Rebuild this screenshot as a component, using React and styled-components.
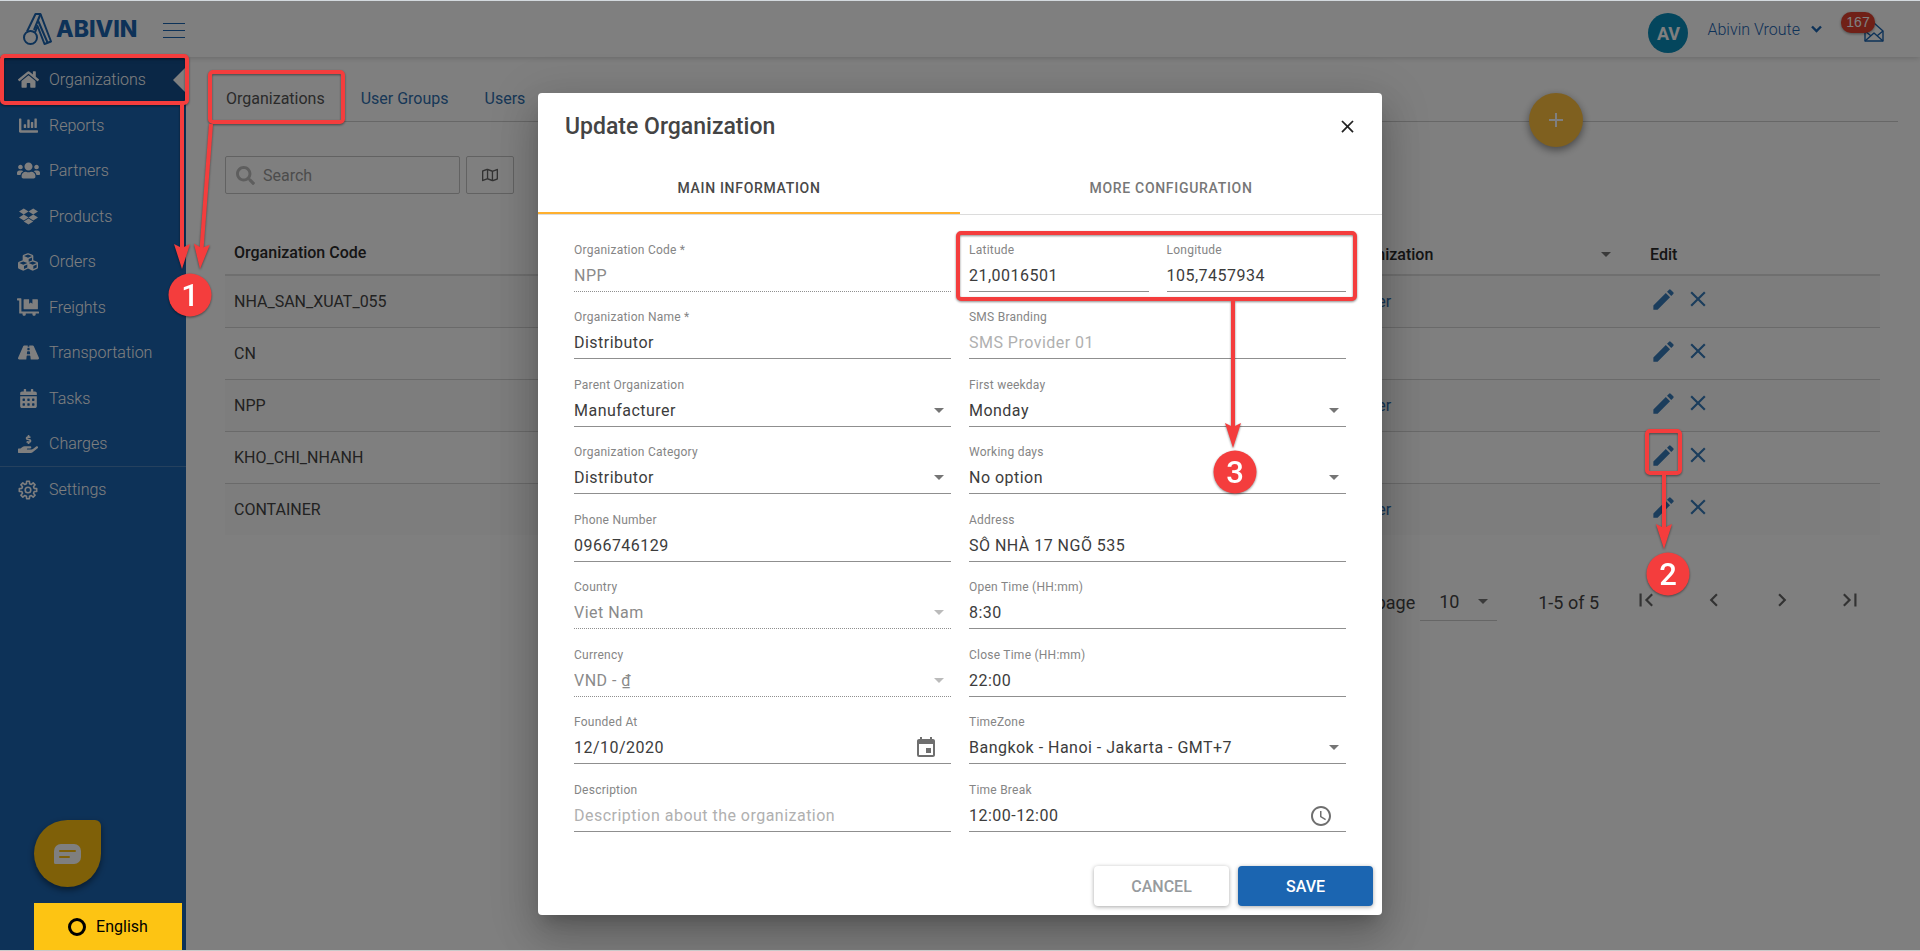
import React from "react";
import styled, { createGlobalStyle, css } from "styled-components";
import {
  FaHome, FaChartBar, FaUsers, FaDropbox, FaCubes, FaDollyFlatbed, FaRoad,
  FaCalendarAlt, FaHandHoldingUsd, FaSearch, FaRegMap,
} from "react-icons/fa";
import {
  MdEdit, MdClose, MdFirstPage, MdLastPage, MdChevronLeft, MdChevronRight,
  MdEvent, MdAccessTime, MdAdd,
} from "react-icons/md";

const BLUE = "#1b64b0";
const LINK = "#2f6fae";
const RED = "#f43d3d";

const GlobalStyle = createGlobalStyle`
  *, *::before, *::after { box-sizing: border-box; }
  body { margin: 0; }
  body, button, input, select {
    font-family: Roboto, "Liberation Sans", sans-serif;
    font-size: 16px;
  }
  button { cursor: pointer; }
`;

/* ---------- page shell ---------- */

const Shell = styled.div`
  position: relative;
  min-height: 100vh;
  display: flex;
  flex-direction: column;
  background: #fff;
  border-top: 1px solid #d3d9de;
  border-bottom: 1px solid #c9c9c9;
  overflow: hidden;
`;

const Header = styled.header`
  position: relative;
  z-index: 1;
  height: 56px;
  display: flex;
  align-items: center;
  padding: 0 36px 0 23px;
  box-shadow: 0 1px 6px rgba(0, 0, 0, 0.18);
`;

const Logo = styled.a`
  display: flex;
  align-items: center;
  gap: 4px;
  height: 56px;
  color: ${BLUE};
  font-family: Inter, sans-serif;
  font-weight: 800;
  font-size: 23px;
  text-decoration: none;
`;

const MenuToggle = styled.button`
  width: 22px;
  height: 15px;
  margin: 2px 0 0 26px;
  padding: 0;
  border: solid ${BLUE};
  border-width: 1px 0;
  background: linear-gradient(${BLUE}, ${BLUE}) center / 100% 1px no-repeat;
`;

const Account = styled.div`
  margin-left: auto;
  display: flex;
  align-items: center;
  color: ${BLUE};
`;

const Avatar = styled.span`
  width: 40px;
  height: 40px;
  margin-top: 8px;
  border-radius: 50%;
  background: #098cba;
  color: #fff;
  display: grid;
  place-items: center;
  font-size: 18px;
  font-weight: 700;
`;

const UserMenu = styled.button`
  display: flex;
  align-items: center;
  gap: 11px;
  padding: 0;
  margin: 0 42px 0 19px;
  border: 0;
  background: none;
  color: ${BLUE};
  font-weight: 300;
`;

const Mailbox = styled.a`
  position: relative;
  display: block;
  height: 20px;
  margin-top: 6px;
  color: ${BLUE};
`;

const Badge = styled.span`
  position: absolute;
  right: 9px;
  top: -10px;
  width: 34px;
  height: 21px;
  border-radius: 10px;
  background: #e0402f;
  color: #fff;
  box-shadow: 0 1px 3px rgba(0, 0, 0, 0.4);
  font: 14px/20px "Liberation Sans", sans-serif;
  text-align: center;
`;

const Body = styled.div`
  flex: 1;
  display: flex;
`;

/* ---------- sidebar ---------- */

const Sidebar = styled.nav`
  width: 186px;
  flex: none;
  background: ${BLUE};
  display: flex;
  flex-direction: column;
`;

const NavList = styled.div`
  display: grid;
  grid-auto-rows: 45px 46px;
  border-bottom: ${(p) => (p.$divided ? "1px solid #4a82bd" : "0")};
`;

const NavItem = styled.a`
  position: relative;
  display: grid;
  grid-template-columns: 22px 1fr;
  align-items: center;
  gap: 10px;
  padding: 0 0 0 17px;
  color: #fff;
  font-weight: 300;
  text-decoration: none;
  background: ${(p) => (p.$active ? "#144e8c" : "none")};
  svg { justify-self: center; }
  &::after {
    content: ${(p) => (p.$active ? '""' : "none")};
    position: absolute;
    right: 0;
    top: 10px;
    border: 13px solid transparent;
    border-left-width: 0;
    border-right-color: #fff;
  }
`;

const ChatBubble = styled.button`
  width: 67px;
  height: 67px;
  margin: auto 0 63px 34px;
  padding: 0;
  border: 0;
  border-radius: 50% 6px 50% 50%;
  background: #ffc010;
  box-shadow: 0 3px 6px rgba(0, 0, 0, 0.45);
  display: grid;
  place-items: center;
`;

/* stays clickable above the dialog backdrop */
const LanguageButton = styled.button`
  position: absolute;
  z-index: 3;
  left: 34px;
  bottom: 0;
  width: 148px;
  height: 47px;
  border: 0;
  padding: 0;
  background: #fdc413;
  color: #000;
  display: flex;
  align-items: center;
  justify-content: center;
  gap: 10px;
`;

const Ring = styled.i`
  width: 18px;
  height: 18px;
  border: 3px solid #000;
  border-radius: 50%;
`;

/* ---------- main area ---------- */

const Main = styled.main`
  position: relative;
  flex: 1;
  min-width: 0;
  padding: 18px 22px 0 39px;
`;

const PageTabs = styled.div`
  display: flex;
  gap: 36px;
  height: 47px;
  padding: 0 0 0 1px;
  align-items: center;
  border-bottom: 1px solid #cfcfcf;
`;

const PageTab = styled.a`
  color: ${(p) => (p.$active ? "#555" : LINK)};
  text-decoration: none;
`;

const AddButton = styled.button`
  position: absolute;
  right: 337px;
  top: 36px;
  width: 54px;
  height: 54px;
  border: 0;
  border-radius: 50%;
  padding: 0;
  background: #ffc03f;
  color: #fff;
  box-shadow: 0 3px 8px rgba(0, 0, 0, 0.45);
  display: grid;
  place-items: center;
`;

const Filters = styled.div`
  display: flex;
  gap: 6px;
  margin-top: 34px;
`;

const SearchBox = styled.label`
  width: 235px;
  height: 38px;
  display: flex;
  align-items: center;
  gap: 8px;
  padding: 0 10px;
  border: 1px solid #c4c4c4;
  border-radius: 2px;
  color: #bdbdbd;
  input {
    width: 160px;
    border: 0;
    padding: 0;
    outline: 0;
    background: none;
  }
  input::placeholder { color: #999; }
`;

const MapButton = styled.button`
  width: 48px;
  height: 38px;
  padding: 0;
  border: 1px solid #c4c4c4;
  border-radius: 2px;
  background: none;
  color: #666;
  display: grid;
  place-items: center;
`;

const Table = styled.table`
  width: calc(100% - 18px);
  margin-top: 36px;
  border-collapse: collapse;
  table-layout: fixed;
  color: #444;
  th {
    height: 45px;
    padding: 0 9px;
    text-align: left;
    font-weight: 500;
    color: #2b2b2b;
    border-bottom: 2px solid #dedede;
  }
  th + th { padding-top: 4px; }
  td {
    height: 52px;
    padding: 0 9px;
    border-bottom: 1px solid #d4d4d4;
  }
  tbody tr:nth-child(odd) { background: #fafafa; }
  tbody tr:last-child td { border: 0; }
`;

const SortableHead = styled.span`
  display: flex;
  align-items: center;
  justify-content: space-between;
  padding-right: 21px;
`;

const OrgLink = styled.a`
  padding-left: 4px;
  color: ${LINK};
  text-decoration: none;
`;

const RowActions = styled.div`
  display: flex;
  align-items: center;
  gap: 8px;
  padding-bottom: 4px;
`;

const IconButton = styled.button`
  padding: 0;
  border: 0;
  background: none;
  color: ${(p) => p.$color || "#367ab9"};
  display: grid;
  place-items: center;
`;

const Pagination = styled.div`
  display: flex;
  align-items: center;
  justify-content: flex-end;
  margin-top: 47px;
  padding-right: 35px;
  height: 40px;
  font-size: 18px;
  color: #444;
`;

const PageSize = styled.span`
  position: relative;
  width: 77px;
  margin: 0 41px 0 5px;
  border-bottom: 1px solid #ccc;
  select {
    appearance: none;
    width: 100%;
    height: 36px;
    border: 0;
    padding: 0 0 0 19px;
    background: none;
    font-size: 18px;
    color: #444;
  }
`;

const Pager = styled.div`
  display: flex;
  gap: 42px;
  margin-left: 34px;
  padding-bottom: 4px;
`;

const Triangle = styled.i`
  flex: none;
  border: 5px solid transparent;
  border-top-color: ${(p) => (p.$faded ? "#bbb" : "#757575")};
  border-bottom-width: 0;
  ${(p) =>
    p.$over &&
    css`
      position: absolute;
      right: ${p.$over}px;
      top: 15px;
      pointer-events: none;
    `}
`;

/* ---------- dialog ---------- */

const Backdrop = styled.div`
  position: absolute;
  inset: 0;
  z-index: 2;
  display: flex;
  justify-content: center;
  align-items: flex-start;
  padding: 92px 20px 35px;
  background: rgba(0, 0, 0, 0.5);
`;

const Dialog = styled.section`
  position: relative;
  width: 844px;
  background: #fff;
  border-radius: 4px;
  box-shadow: 0 11px 15px -7px rgba(0, 0, 0, 0.2),
    0 24px 38px 3px rgba(0, 0, 0, 0.14), 0 9px 46px 8px rgba(0, 0, 0, 0.12);
`;

const DialogHead = styled.div`
  display: flex;
  justify-content: space-between;
  align-items: center;
  height: 67px;
  padding: 0 24px 0 27px;
  h2 {
    margin: 0;
    font-size: 23px;
    font-weight: 500;
    color: #444;
  }
`;

const DialogTabs = styled.div`
  display: grid;
  grid-template-columns: 1fr 1fr;
  height: 55px;
  border-bottom: 1px solid #dcdcdc;
`;

const DialogTab = styled.button`
  border: 0;
  padding: 4px 0 0;
  border-bottom: 2px solid ${(p) => (p.$active ? "#ffb02e" : "transparent")};
  background: none;
  font-size: 14px;
  font-weight: 500;
  letter-spacing: 0.05em;
  color: ${(p) => (p.$active ? "#484848" : "#777")};
`;

const Form = styled.form`
  display: grid;
  grid-template-columns: 1fr 1fr;
  grid-auto-rows: 68px 67px;
  column-gap: 18px;
  padding: 9px 36px 0;
`;

const FieldPair = styled.div`
  display: grid;
  grid-template-columns: 1fr 1fr;
  column-gap: 18px;
`;

const FieldBox = styled.div`
  display: flex;
  flex-direction: column;
  justify-content: flex-end;
  min-width: 0;
  label {
    font-size: 12px;
    line-height: 16px;
    letter-spacing: 0.02em;
    color: #858585;
  }
`;

const Control = styled.div`
  position: relative;
  height: 34px;
  display: flex;
  align-items: center;
  padding-top: 2px;
  border-bottom: 1px ${(p) => (p.$disabled ? "dotted" : "solid")} #8f8f8f;
  input, select {
    appearance: none;
    flex: 1;
    width: 100%;
    min-width: 0;
    height: 31px;
    margin: 0;
    padding: 0;
    border: 0;
    outline: 0;
    background: none;
    letter-spacing: 0.03em;
    color: #3c3c3c;
    opacity: 1;
  }
  input:disabled, select:disabled { color: #8a8a8a; }
  input::placeholder { color: #b0b0b0; }
  svg {
    flex: none;
    margin-right: 13px;
    color: #6f6f6f;
  }
`;

const DialogActions = styled.div`
  display: flex;
  justify-content: flex-end;
  gap: 9px;
  padding: 34px 9px 9px;
`;

const ActionButton = styled.button`
  width: 135px;
  height: 40px;
  border: 0;
  border-radius: 4px;
  font-weight: 500;
  background: ${(p) => (p.$primary ? "#1b65b1" : "#fff")};
  color: ${(p) => (p.$primary ? "#fff" : "#979b9e")};
  box-shadow: 0 1px 4px rgba(0, 0, 0, 0.35);
`;

/* ---------- walkthrough marks ---------- */

const MarkLayer = styled.svg`
  position: absolute;
  z-index: 4;
  top: ${(p) => p.$top}px;
  ${(p) => (p.$right !== undefined ? `right: ${p.$right}px;` : `left: ${p.$left}px;`)}
  pointer-events: none;
  overflow: visible;
  filter: drop-shadow(0 1px 1px rgba(0, 0, 0, 0.45));
  rect { fill: none; stroke: ${RED}; stroke-width: 4; }
  line { stroke: ${RED}; stroke-width: 4; }
  circle, path { fill: ${RED}; }
  text {
    fill: #fff;
    font: 500 31px Roboto, sans-serif;
    text-anchor: middle;
  }
`;

function Arrow({ x1, y1, x2, y2 }) {
  const angle = (Math.atan2(y2 - y1, x2 - x1) * 180) / Math.PI - 90;
  const length = Math.hypot(x2 - x1, y2 - y1);
  return (
    <g transform={`translate(${x1} ${y1}) rotate(${angle})`}>
      <line x1="0" y1="0" x2="0" y2={length - 18} />
      <path d={`M0 ${length}L-8 ${length - 25}L0 ${length - 21}L8 ${length - 25}Z`} />
    </g>
  );
}

function Step({ x, y, n }) {
  return (
    <g>
      <circle cx={x} cy={y} r="21.5" />
      <text x={x} y={y + 11}>{n}</text>
    </g>
  );
}

/* outlined cog with eight teeth, each with a wide foot and a narrower tip */
function GearIcon() {
  const points = [];
  for (let i = 0; i < 8; i++) {
    [[-14, 6.4], [-9, 8.8], [9, 8.8], [14, 6.4]].forEach(([offset, r]) => {
      const a = ((i * 45 + offset) * Math.PI) / 180;
      points.push(`${(10 + r * Math.cos(a)).toFixed(2)},${(10 + r * Math.sin(a)).toFixed(2)}`);
    });
  }
  return (
    <svg width="20" height="20" viewBox="0 0 20 20" fill="none" stroke="currentColor" strokeWidth="1.6" strokeLinejoin="round">
      <polygon points={points.join(" ")} />
      <circle cx="10" cy="10" r="2.8" />
    </svg>
  );
}

/* ---------- data ---------- */

const NAV = [
  ["Organizations", FaHome, 21],
  ["Reports", FaChartBar, 19],
  ["Partners", FaUsers, 23],
  ["Products", FaDropbox, 19],
  ["Orders", FaCubes, 20],
  ["Freights", FaDollyFlatbed, 22],
  ["Transportation", FaRoad, 21],
  ["Tasks", FaCalendarAlt, 19],
  ["Charges", FaHandHoldingUsd, 20],
];

const ROWS = [
  ["NHA_SAN_XUAT_055", "Manufacturer"],
  ["CN", ""],
  ["NPP", "Manufacturer"],
  ["KHO_CHI_NHANH", ""],
  ["CONTAINER", "Manufacturer"],
];

const FIELDS = [
  { label: "Organization Code *", value: "NPP", disabled: true },
  [
    { label: "Latitude", value: "21,0016501" },
    { label: "Longitude", value: "105,7457934" },
  ],
  { label: "Organization Name *", value: "Distributor" },
  { label: "SMS Branding", placeholder: "SMS Provider 01" },
  { label: "Parent Organization", value: "Manufacturer", select: true },
  { label: "First weekday", value: "Monday", select: true },
  { label: "Organization Category", value: "Distributor", select: true },
  { label: "Working days", value: "No option", select: true },
  { label: "Phone Number", value: "0966746129" },
  { label: "Address", value: "SỖ NHÀ 17 NGÕ 535" },
  { label: "Country", value: "Viet Nam", select: true, disabled: true },
  { label: "Open Time (HH:mm)", value: "8:30" },
  { label: "Currency", value: "VND - ₫", select: true, disabled: true },
  { label: "Close Time (HH:mm)", value: "22:00" },
  { label: "Founded At", value: "12/10/2020", icon: MdEvent },
  { label: "TimeZone", value: "Bangkok - Hanoi - Jakarta - GMT+7", select: true },
  { label: "Description", placeholder: "Description about the organization" },
  { label: "Time Break", value: "12:00-12:00", icon: MdAccessTime },
];

function Field({ label, value, placeholder, select, disabled, icon: Icon }) {
  const id = label.toLowerCase().replace(/[^a-z]+/g, "-");
  return (
    <FieldBox>
      <label htmlFor={id}>{label}</label>
      <Control $disabled={disabled}>
        {select ? (
          <>
            <select id={id} defaultValue={value} disabled={disabled}>
              <option>{value}</option>
            </select>
            <Triangle $faded={disabled} $over={7} />
          </>
        ) : (
          <input id={id} type="text" defaultValue={value} placeholder={placeholder} disabled={disabled} />
        )}
        {Icon && <Icon size={24} />}
      </Control>
    </FieldBox>
  );
}

export default function App() {
  return (
    <Shell>
      <GlobalStyle />
      <Header>
        <Logo href="#">
          <svg width="29" height="34" viewBox="0 0 29 34" fill="none" stroke="currentColor" strokeWidth="2" strokeLinejoin="round">
            <circle cx="7.5" cy="25.5" r="6.5" />
            <path d="M4 19.5L12.5 2H17.5L28 29.5L21.5 32L14.5 14L12 20.5" />
            <path d="M17.5 2L11 18M15 8.5L24.5 30.5" />
          </svg>
          ABIVIN
        </Logo>
        <MenuToggle aria-label="Toggle menu" />
        <Account>
          <Avatar>AV</Avatar>
          <UserMenu>
            Abivin Vroute
            <svg width="11" height="8" viewBox="0 0 11 8" fill="none" stroke="currentColor" strokeWidth="2.4">
              <path d="M1 1.5L5.5 6L10 1.5" />
            </svg>
          </UserMenu>
          <Mailbox href="#" aria-label="Messages">
            <svg width="20" height="20" viewBox="0 0 20 20" fill="none" stroke="currentColor" strokeWidth="1.4" strokeLinejoin="round">
              <path d="M1 9L10 1L19 9V19H1Z" />
              <path d="M1 9L6.5 13.5M19 9L13.5 13.5M1 19L10 11L19 19" />
            </svg>
            <Badge>167</Badge>
          </Mailbox>
        </Account>
      </Header>

      <Body>
        <Sidebar>
          <NavList $divided>
            {NAV.map(([name, Icon, size], i) => (
              <NavItem key={name} href="#" $active={i === 0}>
                <Icon size={size} />
                {name}
              </NavItem>
            ))}
          </NavList>
          <NavList>
            <NavItem href="#">
              <GearIcon />
              Settings
            </NavItem>
          </NavList>
          <ChatBubble aria-label="Chat">
            <svg width="27" height="20" viewBox="0 0 27 20">
              <path d="M7 0H20A7 7 0 0 1 27 7V13A7 7 0 0 1 20 20H1.500Q0 20 0 18.500V7A7 7 0 0 1 7 0Z" fill="#fff" />
              <path d="M6 7H21M6 13H15" stroke="#ffc010" strokeWidth="2" strokeLinecap="round" />
            </svg>
          </ChatBubble>
        </Sidebar>

        <Main>
          <PageTabs>
            <PageTab href="#" $active>Organizations</PageTab>
            <PageTab href="#">User Groups</PageTab>
            <PageTab href="#">Users</PageTab>
          </PageTabs>
          <AddButton aria-label="Add organization"><MdAdd size={24} /></AddButton>
          <Filters>
            <SearchBox>
              <FaSearch size={19} />
              <input type="text" placeholder="Search" aria-label="Search" />
            </SearchBox>
            <MapButton aria-label="Map"><FaRegMap size={16} /></MapButton>
          </Filters>

          <Table>
            <colgroup>
              <col />
              <col style={{ width: 359 }} />
              <col style={{ width: 239 }} />
            </colgroup>
            <thead>
              <tr>
                <th>Organization Code</th>
                <th><SortableHead>Parent Organization <Triangle /></SortableHead></th>
                <th>Edit</th>
              </tr>
            </thead>
            <tbody>
              {ROWS.map(([code, parent]) => (
                <tr key={code}>
                  <td>{code}</td>
                  <td>{parent && <OrgLink href="#">{parent}</OrgLink>}</td>
                  <td>
                    <RowActions>
                      <IconButton aria-label={`Edit ${code}`}><MdEdit size={27} /></IconButton>
                      <IconButton aria-label={`Delete ${code}`}><MdClose size={26} /></IconButton>
                    </RowActions>
                  </td>
                </tr>
              ))}
            </tbody>
          </Table>

          <Pagination>
            <label htmlFor="page-size">Rows per page</label>
            <PageSize>
              <select id="page-size" defaultValue="10"><option>10</option></select>
              <Triangle $over={9} />
            </PageSize>
            1-5 of 5
            <Pager>
              <IconButton $color="#666" aria-label="First page"><MdFirstPage size={26} /></IconButton>
              <IconButton $color="#666" aria-label="Previous page"><MdChevronLeft size={26} /></IconButton>
              <IconButton $color="#666" aria-label="Next page"><MdChevronRight size={26} /></IconButton>
              <IconButton $color="#666" aria-label="Last page"><MdLastPage size={26} /></IconButton>
            </Pager>
          </Pagination>
        </Main>
      </Body>

      <Backdrop>
        <Dialog role="dialog" aria-labelledby="dialog-title">
          <DialogHead>
            <h2 id="dialog-title">Update Organization</h2>
            <IconButton $color="#222" aria-label="Close"><MdClose size={21} /></IconButton>
          </DialogHead>
          <DialogTabs>
            <DialogTab $active>MAIN INFORMATION</DialogTab>
            <DialogTab>MORE CONFIGURATION</DialogTab>
          </DialogTabs>
          <Form>
            {FIELDS.map((f, i) =>
              Array.isArray(f) ? (
                <FieldPair key={i}>{f.map((g) => <Field key={g.label} {...g} />)}</FieldPair>
              ) : (
                <Field key={i} {...f} />
              )
            )}
          </Form>
          <DialogActions>
            <ActionButton>CANCEL</ActionButton>
            <ActionButton $primary>SAVE</ActionButton>
          </DialogActions>
          <MarkLayer $top={138} $left={418} width="401" height="360">
            <rect x="2" y="2" width="397" height="66" rx="3" />
            <Arrow x1={277} y1={70} x2={277} y2={217} />
            <Step x={279} y={241} n="3" />
          </MarkLayer>
        </Dialog>
      </Backdrop>

      <LanguageButton><Ring />English</LanguageButton>

      <MarkLayer $top={53} $left={0} width="350" height="270">
        <rect x="2" y="2" width="185" height="47" rx="3" />
        <rect x="210" y="18" width="133" height="50" rx="3" />
        <Arrow x1={182} y1={51} x2={182} y2={215} />
        <Arrow x1={211} y1={70} x2={200} y2={215} />
        <Step x={190} y={241} n="1" />
      </MarkLayer>
      <MarkLayer $top={428} $right={230} width="45" height="170">
        <rect x="2" y="2" width="33" height="42" rx="3" />
        <Arrow x1={19} y1={46} x2={19} y2={120} />
        <Step x={23} y={145} n="2" />
      </MarkLayer>
    </Shell>
  );
}
